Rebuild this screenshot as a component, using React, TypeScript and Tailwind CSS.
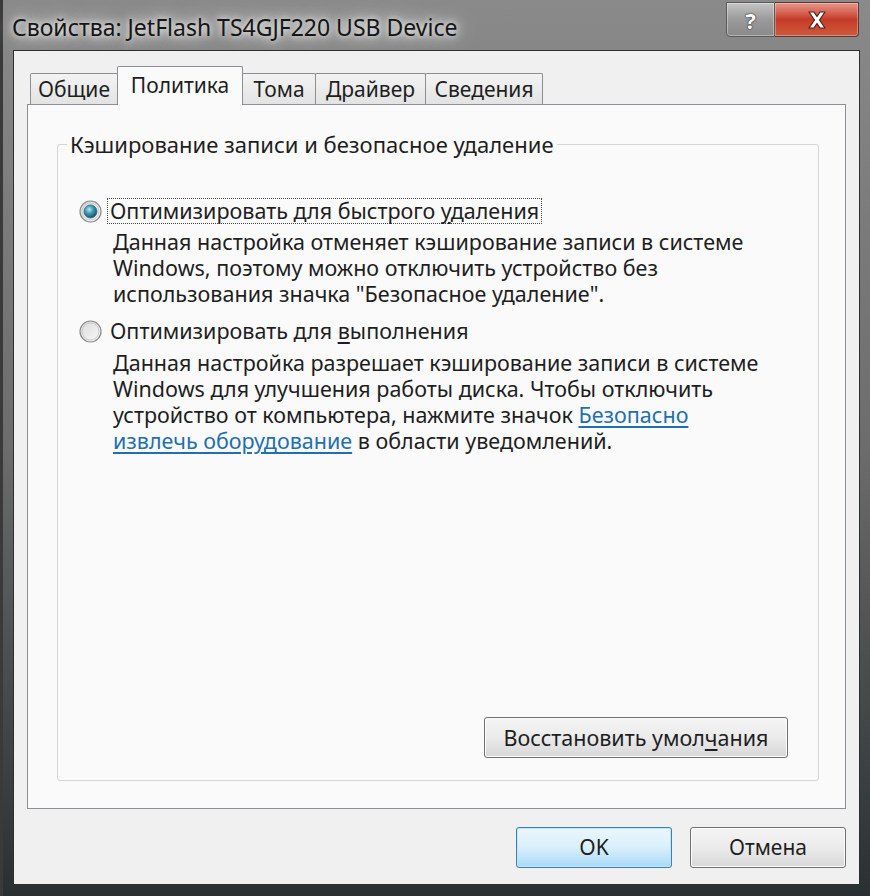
import React from 'react';

const font = "font-['Noto_Sans',_'Open_Sans',_sans-serif]";

const RadioDot: React.FC<{ checked?: boolean }> = ({ checked }) => (
  <svg width="23" height="23" viewBox="0 0 23 23" className="shrink-0">
    <defs>
      <linearGradient id={checked ? 'rgOn' : 'rgOff'} x1="0" y1="0" x2="1" y2="1">
        <stop offset="0" stopColor="#d9d9d9" />
        <stop offset="1" stopColor="#fbfbfb" />
      </linearGradient>
      <radialGradient id="dotOn" cx="0.4" cy="0.35" r="0.7">
        <stop offset="0" stopColor="#b5eaf6" />
        <stop offset="0.45" stopColor="#3f98b4" />
        <stop offset="1" stopColor="#124a5e" />
      </radialGradient>
    </defs>
    <circle cx="11.5" cy="11.5" r="10.5" fill={`url(#${checked ? 'rgOn' : 'rgOff'})`} stroke="#8b8b8b" strokeWidth="1.2" />
    <circle cx="11.5" cy="11.5" r="8.5" fill="none" stroke="#c8c8c8" strokeWidth="1" />
    {checked && <circle cx="11.5" cy="11.5" r="6.5" fill="url(#dotOn)" stroke="#2b6a7e" strokeWidth="0.8" />}
  </svg>
);

const tabs = [
  { label: 'Общие', w: 'w-[88px]' },
  { label: 'Политика', w: 'w-[126px]', active: true },
  { label: 'Тома', w: 'w-[74px]' },
  { label: 'Драйвер', w: 'w-[111px]' },
  { label: 'Сведения', w: 'w-[118px]' },
];

const Line: React.FC<{ children: React.ReactNode }> = ({ children }) => (
  <div className="h-[26px] leading-[26px] whitespace-nowrap">{children}</div>
);

const link = 'text-[#1f6fb2] underline underline-offset-[3px]';

export default function App() {
  return (
    <div className={`${font} w-[870px] h-[896px] flex flex-col bg-gradient-to-b from-[#8a8a8a] via-[#6c6c6c] to-[#2a3032] border-l-[3px] border-l-[#3a3a3a] text-[#1e1e1e]`}>
      {/* title bar */}
      <div className="h-[50px] flex items-start pl-[9px] pr-[11px] shrink-0">
        <div className="pt-[10px] text-[23px] leading-[34px] text-[#151515] [text-shadow:0_0_6px_#fff,0_0_14px_#eee,0_0_24px_#ddd]">
          Свойства: JetFlash TS4GJF220 USB Device
        </div>
        <div className="ml-auto mt-[2px] flex">
          <div className="w-[49px] h-[35px] rounded-bl-[4px] border border-[#5a5a5a] bg-gradient-to-b from-[#c4c4c4] via-[#9a9a9a] to-[#8a8a8a] shadow-[inset_0_0_0_1px_rgba(255,255,255,0.35)] flex items-center justify-center">
            <span className="text-white font-bold text-[22px] leading-none [text-shadow:0_0_2px_#333,0_0_1px_#000]">?</span>
          </div>
          <div className="w-[84px] h-[35px] rounded-br-[4px] border border-l-0 border-[#5a3a36] bg-gradient-to-b from-[#e8968a] via-[#c53a28] to-[#cf5a3c] shadow-[inset_0_0_0_1px_rgba(255,255,255,0.3)] flex items-center justify-center">
            <svg width="22" height="20" viewBox="0 0 22 20">
              <path d="M3 2h5l3 4.5L14 2h5l-5.5 8L19 18h-5l-3-4.5L8 18H3l5.5-8z" fill="#fff" stroke="#4a2320" strokeWidth="1.2" strokeLinejoin="round" />
            </svg>
          </div>
        </div>
      </div>

      {/* client */}
      <div className="flex-1 mr-[10px] mb-[13px] ml-[10px] border border-[#2e2e2e] bg-[#f0f0f0] flex flex-col pl-[13px] pr-[13px] pt-[15px] pb-[16px]">
        {/* tab row */}
        <div className="flex items-end pl-[4px] h-[38px] relative z-10">
          {tabs.map((t) =>
            t.active ? (
              <div key={t.label} className={`${t.w} h-[39px] -mb-px -ml-px bg-[#fafafa] border border-b-0 border-[#8c8e94] rounded-t-[2px] flex items-start justify-center pt-[4px] text-[21px] leading-[28px]`}>
                {t.label}
              </div>
            ) : (
              <div key={t.label} className={`${t.w} h-[31px] -ml-px bg-gradient-to-b from-[#f3f3f3] to-[#e3e3e3] border border-b-0 border-[#8c8e94] rounded-t-[2px] flex items-center justify-center text-[21px] leading-[28px]`}>
                {t.label}
              </div>
            )
          )}
        </div>

        {/* tab panel */}
        <div className="h-[705px] border border-[#8c8e94] bg-[#fafafa] pt-[39px] pl-[29px] pr-[26px] pb-[27px] flex flex-col">
          {/* group box */}
          <div className="flex-1 border border-[#d5d5d5] rounded-[3px] flex flex-col pl-[21px] pr-[30px] pb-[22px]">
            <div className="-mt-[14px] -ml-[12px] self-start px-[3px] bg-[#fafafa] text-[22px] leading-[26px]">
              Кэширование записи и безопасное удаление
            </div>

            <div className="mt-[41px] flex items-center h-[26px]">
              <RadioDot checked />
              <span className="ml-[5px] px-[2px] border border-dotted border-[#444] text-[21.5px] leading-[24px]">
                Оптимизировать для быстрого <span className="underline underline-offset-[3px]">у</span>даления
              </span>
            </div>
            <div className="ml-[34px] mt-[5px] text-[21.5px]">
              <Line>Данная настройка отменяет кэширование записи в системе</Line>
              <Line>Windows, поэтому можно отключить устройство без</Line>
              <Line>использования значка "Безопасное удаление".</Line>
            </div>

            <div className="mt-[11px] flex items-center h-[26px]">
              <RadioDot />
              <span className="ml-[8px] text-[21.5px] leading-[24px]">
                Оптимизировать для <span className="underline underline-offset-[3px]">в</span>ыполнения
              </span>
            </div>
            <div className="ml-[34px] mt-[6px] text-[21.5px]">
              <Line>Данная настройка разрешает кэширование записи в системе</Line>
              <Line>Windows для улучшения работы диска. Чтобы отключить</Line>
              <Line>
                устройство от компьютера, нажмите значок <span className={link}>Безопасно</span>
              </Line>
              <Line>
                <span className={link}>извлечь оборудование</span> в области уведомлений.
              </Line>
            </div>

            <button className="mt-auto self-end w-[304px] h-[41px] rounded-[3px] border border-[#707070] bg-gradient-to-b from-[#f4f4f4] via-[#ebebeb] to-[#d8d8d8] shadow-[inset_0_0_0_1px_#fcfcfc] text-[21.5px] leading-none">
              Восстановить умол<span className="underline underline-offset-[3px]">ч</span>ания
            </button>
          </div>
        </div>

        {/* dialog buttons */}
        <div className="mt-[18px] flex justify-end gap-[18px]">
          <button className="w-[156px] h-[41px] rounded-[3px] border border-[#3c7fb1] bg-gradient-to-b from-[#eaf6fd] via-[#d9f0fc] to-[#a7d9f5] shadow-[inset_0_0_0_1px_#bfe6f8] text-[21px] leading-none">
            OK
          </button>
          <button className="w-[156px] h-[41px] rounded-[3px] border border-[#707070] bg-gradient-to-b from-[#f4f4f4] via-[#ebebeb] to-[#d8d8d8] shadow-[inset_0_0_0_1px_#fcfcfc] text-[21px] leading-none">
            Отмена
          </button>
        </div>
      </div>
    </div>
  );
}
